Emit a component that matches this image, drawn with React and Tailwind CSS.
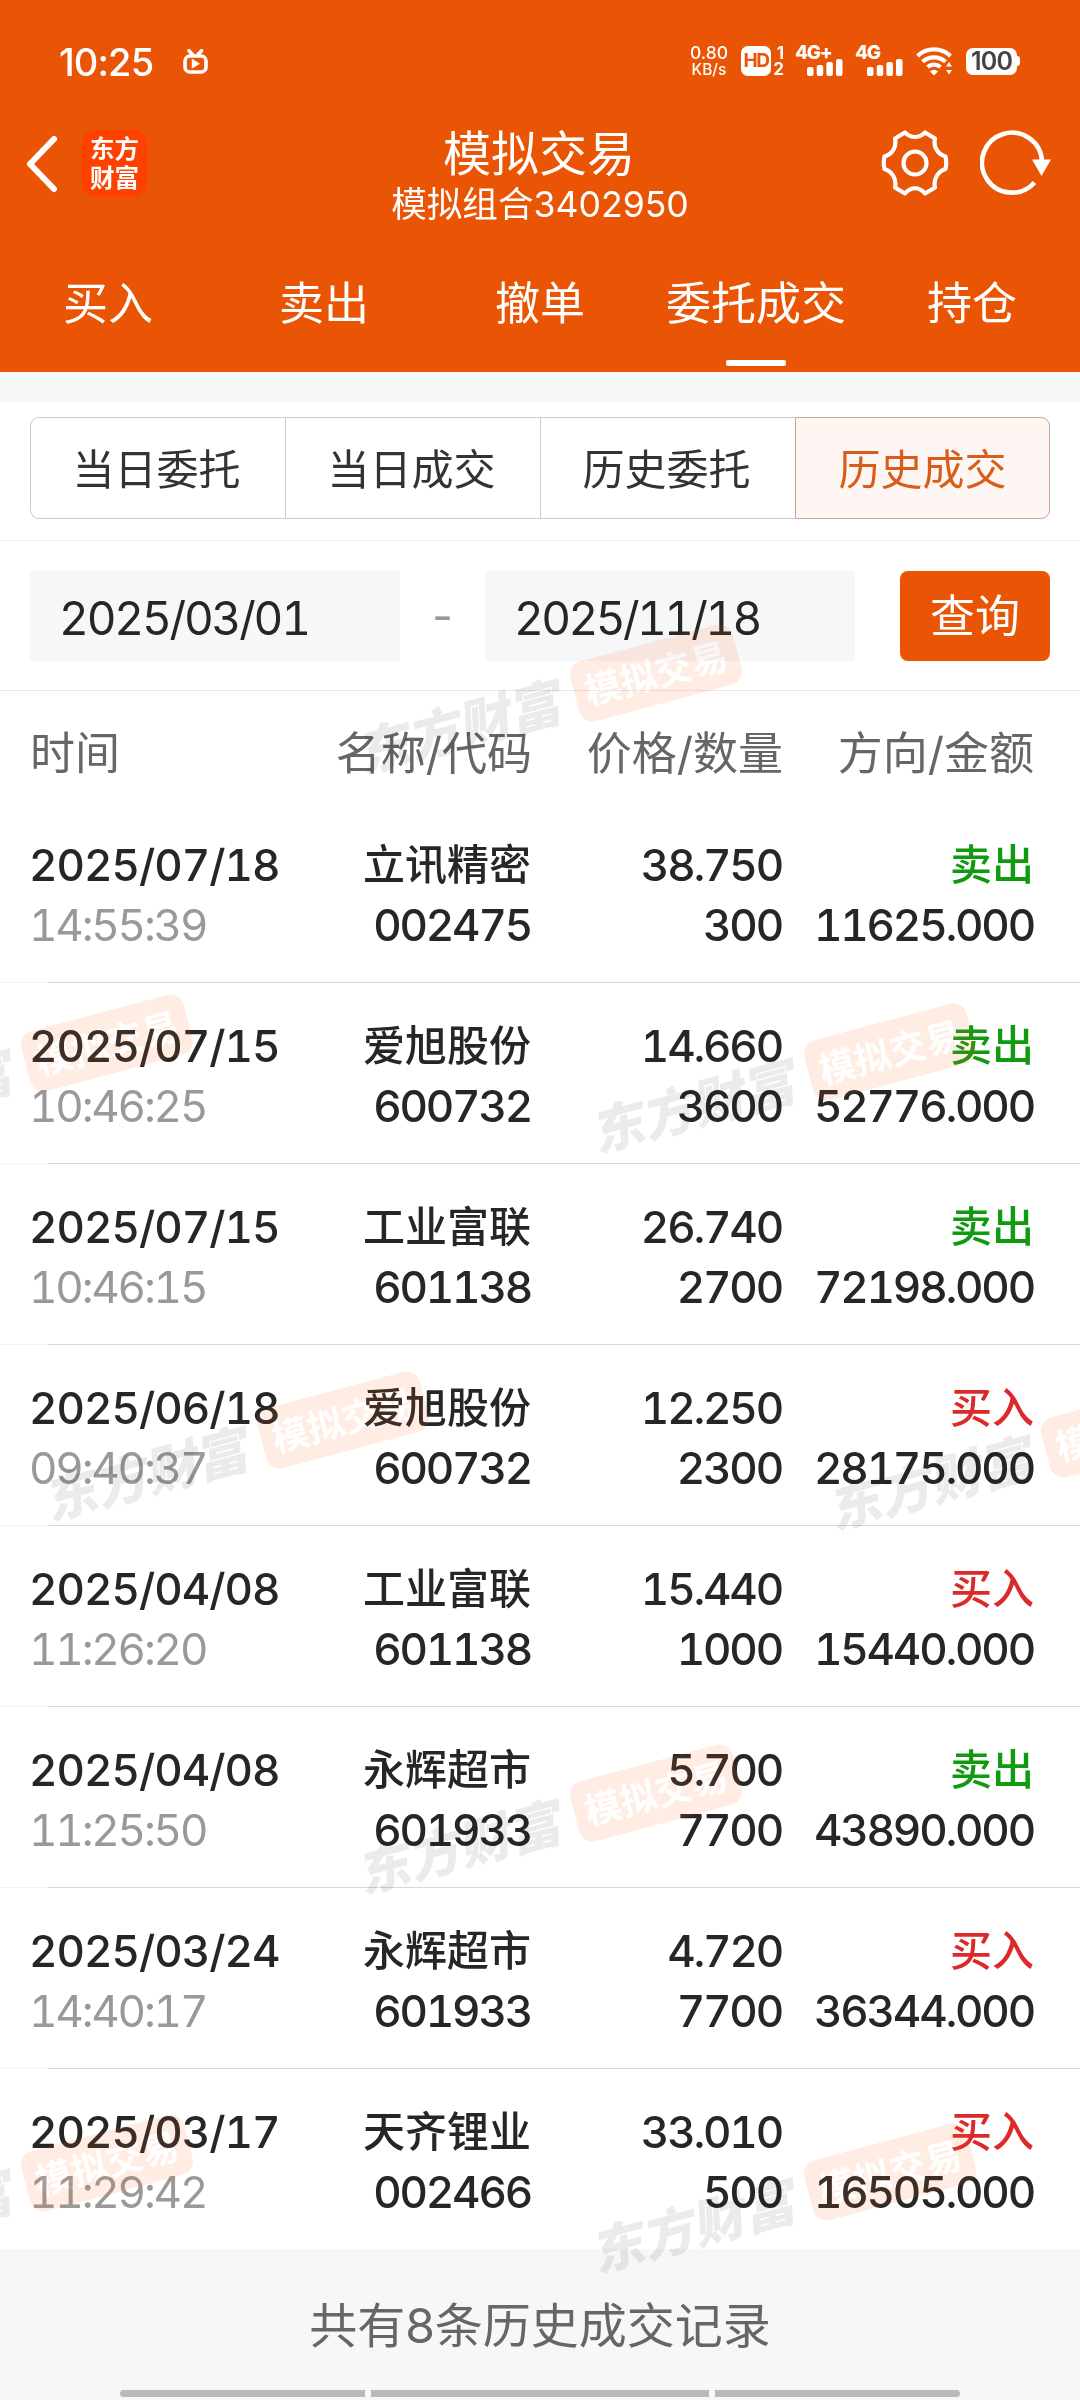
import React from 'react';

const tabs = ['买入', '卖出', '撤单', '委托成交', '持仓'];
const segments = ['当日委托', '当日成交', '历史委托', '历史成交'];

const records = [
  { date: '2025/07/18', time: '14:55:39', name: '立讯精密', code: '002475', price: '38.750', qty: '300', side: '卖出', amount: '11625.000' },
  { date: '2025/07/15', time: '10:46:25', name: '爱旭股份', code: '600732', price: '14.660', qty: '3600', side: '卖出', amount: '52776.000' },
  { date: '2025/07/15', time: '10:46:15', name: '工业富联', code: '601138', price: '26.740', qty: '2700', side: '卖出', amount: '72198.000' },
  { date: '2025/06/18', time: '09:40:37', name: '爱旭股份', code: '600732', price: '12.250', qty: '2300', side: '买入', amount: '28175.000' },
  { date: '2025/04/08', time: '11:26:20', name: '工业富联', code: '601138', price: '15.440', qty: '1000', side: '买入', amount: '15440.000' },
  { date: '2025/04/08', time: '11:25:50', name: '永辉超市', code: '601933', price: '5.700', qty: '7700', side: '卖出', amount: '43890.000' },
  { date: '2025/03/24', time: '14:40:17', name: '永辉超市', code: '601933', price: '4.720', qty: '7700', side: '买入', amount: '36344.000' },
  { date: '2025/03/17', time: '11:29:42', name: '天齐锂业', code: '002466', price: '33.010', qty: '500', side: '买入', amount: '16505.000' },
];

// centre of each watermark's orange tag
const watermarks = [
  [656, 673],
  [107, 1043],
  [890, 1052],
  [343, 1420],
  [1127, 1429],
  [656, 1793],
  [107, 2163],
  [890, 2172],
];

function Bars() {
  return (
    <svg width="36" height="17" viewBox="0 0 36 17" fill="#fff">
      <rect x="0" y="8" width="6.5" height="9" rx="2" />
      <rect x="9.7" y="6" width="6.5" height="11" rx="2" />
      <rect x="19.4" y="3" width="6.5" height="14" rx="2" />
      <rect x="29" y="0" width="6.5" height="17" rx="2" />
    </svg>
  );
}

function StatusBar() {
  return (
    <div className="h-[120px] flex items-center justify-between pl-[59px] pr-[60px] text-white">
      <div className="flex items-center gap-[30px] pt-[3px]">
        <span className="text-[38px] leading-none tracking-[-0.9px] font-medium">10:25</span>
        <svg width="25" height="26" viewBox="0 0 25 26" fill="none" stroke="#fff" strokeWidth="3.6" strokeLinecap="round">
          <path d="M6 1.8 L9.5 5.5 M18.5 1.8 L15 5.5" />
          <rect x="2" y="7" width="21" height="16" rx="5" />
          <path d="M9.5 11 L15.5 14.7 L9.5 18.4 Z" fill="#fff" strokeWidth="1.5" />
        </svg>
      </div>
      <div className="flex items-center pt-[2px]">
        <div className="text-[17.5px] leading-[17px] text-center w-[38px] whitespace-nowrap flex flex-col items-center font-medium">
          <div>0.80</div>
          <div className="text-[15.5px]">KB/s</div>
        </div>
        <div className="ml-[13px] w-[30px] h-[30px] rounded-[7px] bg-white text-[#e95504] text-[19px] font-bold leading-[30px] text-center tracking-[-1.5px]">HD</div>
        <div className="ml-[2px] w-[11px] h-[32px] text-[17px] font-bold leading-[16px] text-right">
          <div>1</div>
          <div>2</div>
        </div>
        <div className="ml-[11px] w-[48px] h-[30px] flex flex-col justify-between">
          <div className="text-[19px] font-extrabold leading-[13px] tracking-[-1.3px]">4G+</div>
          <div className="flex justify-end"><Bars /></div>
        </div>
        <div className="ml-[12px] w-[48px] h-[30px] flex flex-col justify-between">
          <div className="text-[19px] font-extrabold leading-[13px] tracking-[-1.3px]">4G</div>
          <div className="flex justify-end"><Bars /></div>
        </div>
        <svg className="ml-[13px]" width="37" height="30" viewBox="0 0 37 30" fill="none" stroke="#fff" strokeWidth="4.2">
          <path d="M1.5 10 A24 24 0 0 1 34.5 10" />
          <path d="M6.5 15.8 A17 17 0 0 1 29.5 15.8" />
          <path d="M11.5 21 A10 10 0 0 1 24.5 21" />
          <path d="M14 25.5 Q18 22 22 25.5 L18 29.5 Z" fill="#fff" stroke="none" />
          <path d="M30 20.5 L33 16 L36 20.5 Z M30 24 L33 28.5 L36 24 Z" fill="#fff" stroke="none" />
        </svg>
        <div className="ml-[13px] w-[51px] h-[27px] rounded-[7px] bg-white text-[#444] text-[25px] font-semibold leading-[27px] text-center tracking-[-0.8px]">100</div>
        <div className="w-[3px] h-[10px] rounded-r-[3px] bg-white" />
      </div>
    </div>
  );
}

function TitleBar() {
  return (
    <div className="h-[112px] flex text-white">
      <div className="w-[360px] flex pl-[26px] pt-[10px]">
        <svg className="mt-[5px]" width="34" height="58" viewBox="0 0 34 58" fill="none" stroke="#fff" strokeWidth="6" strokeLinecap="round" strokeLinejoin="round">
          <path d="M28 4 L4 29 L28 54" />
        </svg>
        <div className="ml-[22px] w-[65px] h-[67px] rounded-[14px] bg-[#ff4100] font-['Noto_Sans_CJK_SC',sans-serif] text-[24.5px] leading-[29px] font-bold text-center pt-[3px]">
          <div>东方</div>
          <div>财富</div>
        </div>
      </div>
      <div className="w-[360px] text-center">
        <div className="text-[48px] leading-[60px] mt-[4px] -translate-x-px">模拟交易</div>
        <div className="text-[35.6px] leading-[42px]">模拟组合3402950</div>
      </div>
      <div className="w-[360px] flex justify-end pr-[28px] pt-[10px]">
        <svg width="68" height="66" viewBox="0 0 68 66" fill="none" stroke="#fff" strokeWidth="4.2" strokeLinejoin="round">
          <path d="M24 2.5 L14 8.5 C16 17 11 24.5 3.5 26.5 Q2 33 3.5 39 C11 41.5 16 49 14 57.5 L24 63.5 C30 56.5 38 56.5 44 63.5 L54 57.5 C52 49 57 41.5 64.5 39 Q66 33 64.5 26.5 C57 24.5 52 17 54 8.5 L44 2.5 C38 8.5 30 8.5 24 2.5 Z" />
          <circle cx="34" cy="33" r="11.5" />
        </svg>
        <svg className="ml-[31px]" width="72" height="66" viewBox="0 0 72 66" fill="none" stroke="#fff" strokeWidth="4.6">
          <path d="M54.5 52.5 A30 30 0 1 1 62 32" />
          <path d="M52 29.5 L71 29.5 L61.5 46 Z" fill="#fff" stroke="none" />
        </svg>
      </div>
    </div>
  );
}

function Watermark({ x, y }) {
  return (
    <>
      <div
        className="absolute w-0 h-0 mix-blend-multiply -rotate-15 font-['Noto_Sans_CJK_SC',sans-serif]"
        style={{ left: x, top: y }}
      >
        <div className="absolute left-[-84px] top-[-31px] w-[168px] h-[62px] rounded-[14px] bg-[#ffece4] text-white text-[36.5px] leading-[60px] font-bold text-center">模拟交易</div>
        <div className="absolute left-[-304px] top-[-31px] w-[212px] h-[60px] text-[#ebebeb] text-[52px] leading-[60px] font-black whitespace-nowrap -skew-x-12">东方财富</div>
      </div>
      {/* warms up the dark text under the tag */}
      <div className="absolute w-0 h-0 mix-blend-screen -rotate-15" style={{ left: x, top: y }}>
        <div className="absolute left-[-84px] top-[-31px] w-[168px] h-[62px] rounded-[14px] bg-[#1c0a02]" />
      </div>
    </>
  );
}

export default function App() {
  return (
    <div className="relative w-[1080px] h-[2400px] overflow-hidden bg-white text-[#262626] font-[Inter,'Noto_Sans_CJK_SC',sans-serif]">
      <header className="h-[372px] bg-[#e95504]">
        <StatusBar />
        <TitleBar />
        <nav className="h-[140px] grid grid-cols-5 text-white text-[45px]">
          {tabs.map((t) => (
            <div key={t} className="flex flex-col items-center justify-between">
              <span className="mt-[39px] leading-[66px] whitespace-nowrap">{t}</span>
              {t === '委托成交' && <span className="w-[60px] h-[6px] mb-[6px] rounded-[2px] bg-white" />}
            </div>
          ))}
        </nav>
      </header>

      <div className="h-[30px] bg-[#f6f7f9]" />

      <div className="h-[139px] px-[30px] pt-[15px] border-b border-[#ededed]">
        <div className="flex h-[102px] text-[42px]">
          {segments.map((s, i) => (
            <div
              key={s}
              className={
                i === 3
                  ? 'w-[255px] pt-[2px] flex items-center justify-center border border-[#c9a48f] bg-[#fef6f3] text-[#d95d1a] rounded-r-[9px]'
                  : 'w-[255px] pt-[2px] pr-[3px] flex items-center justify-center border border-r-0 border-[#ccc] text-[#333] first:rounded-l-[9px]'
              }
            >
              {s}
            </div>
          ))}
        </div>
      </div>

      <div className="h-[150px] px-[30px] flex items-center border-b border-[#e8e8e8] text-[45px] tabular-nums [font-kerning:none]">
        <div className="w-[370px] h-[90px] bg-[#f6f7f9] pl-[29px] leading-[94px] text-[46px] tracking-[-2.2px]">2025/03/01</div>
        <div className="w-[85px] text-center text-[#999]">-</div>
        <div className="w-[370px] h-[90px] bg-[#f6f7f9] pl-[29px] leading-[94px] text-[46px] tracking-[-2.6px]">2025/11/18</div>
        <button className="ml-[45px] w-[150px] h-[90px] pt-[2px] rounded-[8px] bg-[#e95504] text-white">查询</button>
      </div>

      <div className="h-[110px] pl-[30px] pr-[46px] pt-[15px] flex items-center text-[45px] text-[#666] whitespace-nowrap">
        <span className="w-[252px]">时间</span>
        <span className="w-[250px] text-right">名称/代码</span>
        <span className="w-[251px] text-right">价格/数量</span>
        <span className="flex-1 text-right">方向/金额</span>
      </div>

      {records.map((r, i) => (
        <div key={i} className="relative h-[181px] pl-[29px] pr-[46px] pt-[34px] flex text-[44px] leading-[60px] tracking-[-2.2px] font-medium whitespace-nowrap tabular-nums [font-kerning:none]">
          <div className="w-[270px]">
            <div className="tracking-[-1px]">{r.date}</div>
            <div className="text-[#999] font-normal tracking-[-2.2px]">{r.time}</div>
          </div>
          <div className="w-[232px] text-right">
            <div className="text-[42px] tracking-normal">{r.name}</div>
            <div>{r.code}</div>
          </div>
          <div className="w-[251px] text-right">
            <div>{r.price}</div>
            <div>{r.qty}</div>
          </div>
          <div className="flex-1 text-right">
            <div className={r.side === '卖出' ? 'text-[42px] tracking-normal text-[#109a10]' : 'text-[42px] tracking-normal text-[#dc2a2a]'}>{r.side}</div>
            <div>{r.amount}</div>
          </div>
          {i > 0 && (
            <div className="absolute left-0 right-0 top-0 h-px flex">
              <div className="w-[48px] bg-[#f5f5f5]" />
              <div className="flex-1 bg-[#d8d8d8]" />
            </div>
          )}
        </div>
      ))}

      <footer className="h-[151px] bg-[#f6f7f9] flex flex-col items-center text-[#666] text-[48px]">
        <div className="mt-[42px] leading-[70px]">共有8条历史成交记录</div>
        <div className="mt-[29px] flex gap-[6px]">
          <div className="w-[245px] h-[7px] rounded-l-full bg-[#bababa]" />
          <div className="w-[338px] h-[7px] bg-[#bababa]" />
          <div className="w-[245px] h-[7px] rounded-r-full bg-[#bababa]" />
        </div>
      </footer>

      {watermarks.map(([x, y]) => (
        <Watermark key={`${x}-${y}`} x={x} y={y} />
      ))}
    </div>
  );
}
